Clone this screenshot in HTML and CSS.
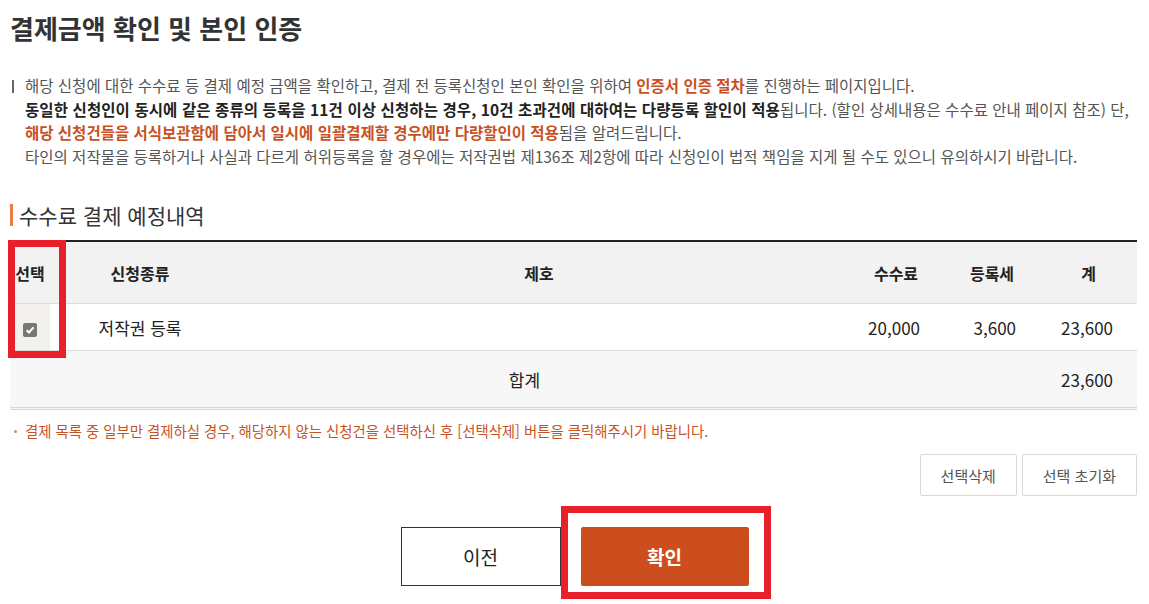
FILE: index.html
```html
<!DOCTYPE html>
<html lang="ko">
<head>
    <meta charset="UTF-8">
    <title>결제금액 확인 및 본인 인증</title>
    <link rel="stylesheet" href="styles.css">
</head>
<body>

<div class="container">
    <h1 class="page-title">결제금액 확인 및 본인 인증</h1>

    <div class="desc">
        <p>해당 신청에 대한 수수료 등 결제 예정 금액을 확인하고, 결제 전 등록신청인 본인 확인을 위하여 <em>인증서 인증 절차</em>를 진행하는 페이지입니다.</p>
        <p><strong>동일한 신청인이 동시에 같은 종류의 등록을 11건 이상 신청하는 경우, 10건 초과건에 대하여는 다량등록 할인이 적용</strong>됩니다. (할인 상세내용은 수수료 안내 페이지 참조) 단,</p>
        <p><em>해당 신청건들을 서식보관함에 담아서 일시에 일괄결제할 경우에만 다량할인이 적용</em>됨을 알려드립니다.</p>
        <p>타인의 저작물을 등록하거나 사실과 다르게 허위등록을 할 경우에는 저작권법 제136조 제2항에 따라 신청인이 법적 책임을 지게 될 수도 있으니 유의하시기 바랍니다.</p>
    </div>

    <h2 class="section-title">수수료 결제 예정내역</h2>

    <div class="table-wrap">
        <table class="fee-table">
            <colgroup>
                <col class="c-check">
                <col class="c-kind">
                <col>
                <col class="c-num">
                <col class="c-num">
                <col class="c-sum">
            </colgroup>
            <thead>
            <tr>
                <th>선택</th>
                <th>신청종류</th>
                <th>제호</th>
                <th>수수료</th>
                <th>등록세</th>
                <th>계</th>
            </tr>
            </thead>
            <tbody>
            <tr>
                <td class="check-cell"><span class="checkbox"><svg width="10" height="10" viewBox="0 0 10 10"><path d="M1.6 5.2 L4 7.5 L8.5 2.3" fill="none" stroke="#fff" stroke-width="2"/></svg></span></td>
                <td>저작권 등록</td>
                <td></td>
                <td class="num">20,000</td>
                <td class="num">3,600</td>
                <td class="num">23,600</td>
            </tr>
            <tr class="total">
                <td></td>
                <td></td>
                <td class="total-label">합계</td>
                <td></td>
                <td></td>
                <td class="num">23,600</td>
            </tr>
            </tbody>
        </table>
        <div class="mark mark-check"></div>
    </div>

    <p class="note">결제 목록 중 일부만 결제하실 경우, 해당하지 않는 신청건을 선택하신 후 [선택삭제] 버튼을 클릭해주시기 바랍니다.</p>

    <div class="tool-set">
        <button type="button" class="btn-small">선택삭제</button>
        <button type="button" class="btn-small">선택 초기화</button>
    </div>

    <div class="actions">
        <button type="button" class="btn-prev">이전</button>
        <div class="confirm-wrap">
            <button type="button" class="btn-ok">확인</button>
            <div class="mark mark-ok"></div>
        </div>
    </div>
</div>

</body>
</html>
```

FILE: styles.css
```css
* {
    box-sizing: border-box;
}

body {
    margin: 0;
    font-family: "Noto Sans CJK KR", "Noto Sans", sans-serif;
    color: #555;
    background: #fff;
}

.container {
    padding: 0 12px 30px 10px;
}

.page-title {
    margin: 10px 0 0;
    font-size: 26px;
    line-height: 36px;
    font-weight: bold;
    color: #333;
}

.desc {
    position: relative;
    margin-top: 28px;
    padding-left: 15px;
    font-size: 15.5px;
    line-height: 23.7px;
    color: #555;
}

.desc::before {
    content: "";
    position: absolute;
    left: 2px;
    top: 6px;
    width: 2px;
    height: 13px;
    background: #666;
}

.desc p {
    margin: 0;
    white-space: nowrap;
}

.desc em {
    font-style: normal;
    font-weight: bold;
    color: #c8521f;
}

.desc strong {
    color: #222;
    letter-spacing: 0.1px;
}

.section-title {
    margin: 35px 0 14px;
    padding-left: 6px;
    border-left: 3px solid #f07c45;
    font-size: 21px;
    line-height: 22px;
    font-weight: normal;
    color: #333;
}

.table-wrap {
    position: relative;
}

.fee-table {
    width: 100%;
    border-collapse: collapse;
    border-top: 2px solid #222;
    border-bottom: 3px double #d6d6d6;
    font-size: 17px;
    color: #222;
}

.c-check {
    width: 40px;
}

.c-kind {
    width: 180px;
}

.c-num {
    width: 96px;
}

.c-sum {
    width: 97px;
}

.fee-table th {
    height: 63px;
    background: #f2f2f2;
    font-size: 16px;
    font-weight: bold;
    text-align: center;
    border-bottom: 1px solid #dcdcdc;
}

.fee-table td {
    height: 47px;
    text-align: center;
    border-bottom: 1px solid #dcdcdc;
}

.fee-table td.num {
    text-align: right;
    padding-right: 24px;
}

.check-cell {
    background: #f3f1ed;
}

.checkbox {
    display: inline-flex;
    align-items: center;
    justify-content: center;
    width: 14px;
    height: 14px;
    border-radius: 2px;
    background: #777;
    vertical-align: middle;
}

.total td {
    height: 58px;
    background: #f7f7f7;
    border-bottom: 0;
}

.total-label {
    padding-right: 30px;
}

.mark {
    position: absolute;
    border: 7px solid #e8202a;
}

.mark-check {
    left: -2px;
    top: 0;
    width: 58px;
    height: 118px;
}

.note {
    margin: 11px 0 0;
    padding-left: 15px;
    position: relative;
    font-size: 14.4px;
    line-height: 20px;
    color: #c8521f;
}

.note::before {
    content: "";
    position: absolute;
    left: 4px;
    top: 9px;
    width: 3px;
    height: 3px;
    border-radius: 50%;
    background: #e8874f;
}

.tool-set {
    display: flex;
    justify-content: flex-end;
    gap: 5px;
    margin-top: 13px;
}

.btn-small {
    height: 42px;
    padding: 0 20px;
    border: 1px solid #d9d9d9;
    border-radius: 2px;
    background: #fff;
    font-family: inherit;
    font-size: 15px;
    color: #555;
}

.actions {
    display: flex;
    justify-content: center;
    gap: 20px;
    margin-top: 31px;
    margin-left: -10px;
    margin-right: -12px;
}

.btn-prev,
.btn-ok {
    height: 59px;
    font-family: inherit;
    font-size: 19px;
}

.btn-prev {
    width: 160px;
    border: 1px solid #333;
    background: #fff;
    color: #222;
}

.confirm-wrap {
    position: relative;
}

.btn-ok {
    width: 168px;
    border: 0;
    border-radius: 2px;
    background: #cc4e1e;
    color: #fff;
    font-weight: bold;
}

.mark-ok {
    left: -20px;
    top: -21px;
    width: 210px;
    height: 93px;
}
```
